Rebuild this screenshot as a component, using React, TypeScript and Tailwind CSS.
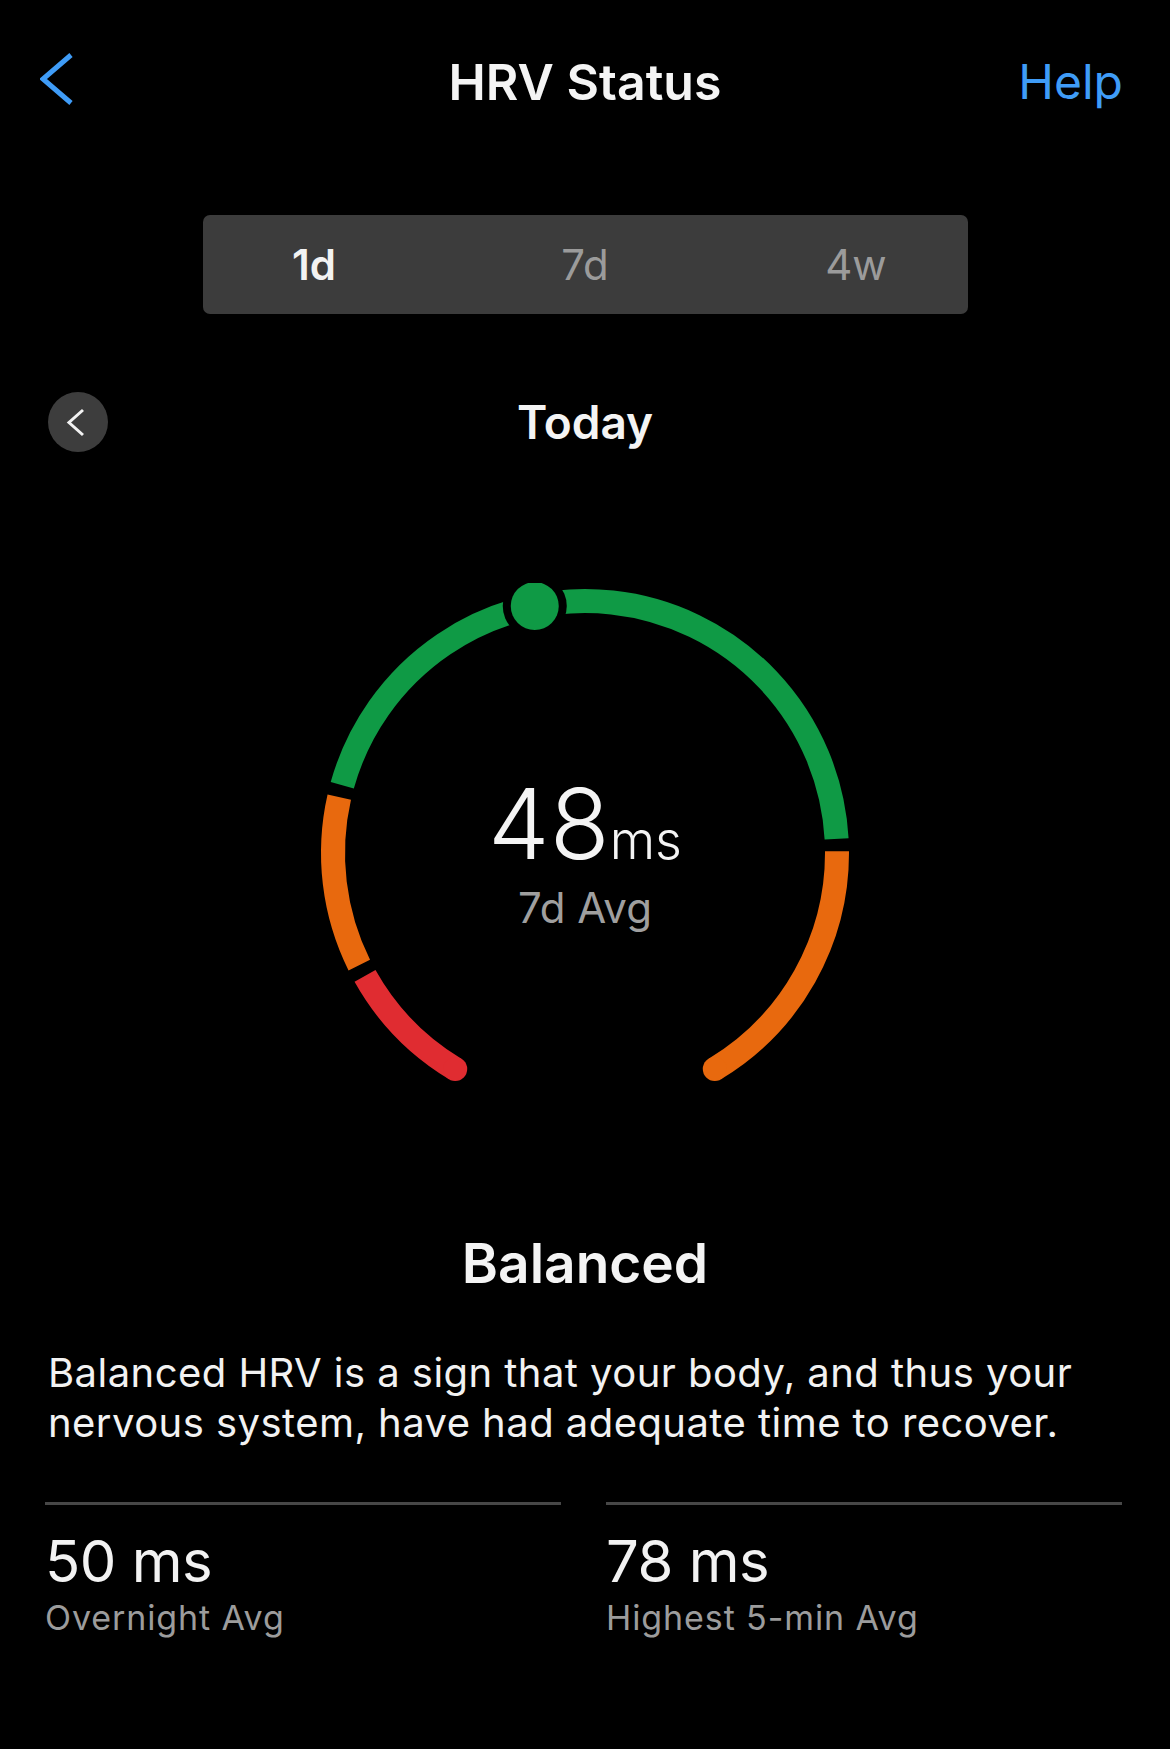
const CX = 300;
const CY = 270;
const R = 252;

// Point on the gauge ring; angle in degrees, clockwise from 12 o'clock.
const pt = (deg: number) => {
  const a = (deg * Math.PI) / 180;
  return [CX + R * Math.sin(a), CY - R * Math.cos(a)];
};

const arc = (from: number, to: number) => {
  const [x1, y1] = pt(from);
  const [x2, y2] = pt(to);
  const large = to - from > 180 ? 1 : 0;
  return `M ${x1} ${y1} A ${R} ${R} 0 ${large} 1 ${x2} ${y2}`;
};

const GREEN = "#0f9a45";
const ORANGE = "#e8690e";
const RED = "#e02c31";

const SEGMENTS = [
  { from: 211, to: 240.8, color: RED },
  { from: 243.6, to: 282.8, color: ORANGE },
  { from: 285.6, to: 446.8, color: GREEN },
  { from: 449.6, to: 509, color: ORANGE },
];

function Gauge() {
  const [sx, sy] = pt(211);
  const [ex, ey] = pt(149);
  const [dx, dy] = pt(348.5);
  return (
    <svg width="600" height="520" viewBox="0 0 600 520" className="block">
      {SEGMENTS.map((s) => (
        <path key={s.from} d={arc(s.from, s.to)} fill="none" stroke={s.color} strokeWidth="24" />
      ))}
      {/* rounded outer ends */}
      <circle cx={sx} cy={sy} r="12" fill={RED} />
      <circle cx={ex} cy={ey} r="12" fill={ORANGE} />
      {/* current value marker */}
      <circle cx={dx} cy={dy} r="32" fill="#000" />
      <circle cx={dx} cy={dy} r="24" fill={GREEN} />
    </svg>
  );
}

function Stat({ value, label }: { value: string; label: string }) {
  return (
    <div className="flex-1">
      <div className="h-[3px] bg-[#474747]" />
      <div className="mt-[27px] text-[58px] leading-none tracking-[-0.5px] text-[#f2f2f2]">{value}</div>
      <div className="mt-[11px] text-[34px] leading-none tracking-[0.9px] text-[#9c9c9c]">{label}</div>
    </div>
  );
}

export default function App() {
  return (
    <div className="w-[1170px] h-[1749px] bg-black font-['Inter',sans-serif] text-white overflow-hidden">
      {/* nav bar */}
      <div className="pt-[56px] h-[108px] grid grid-cols-[1fr_auto_1fr] items-center px-[40px]">
        <svg width="34" height="56" viewBox="0 0 34 56" className="-mt-[6px]">
          <polyline points="31,4 3,28 31,52" fill="none" stroke="#3f9cf7" strokeWidth="5" />
        </svg>
        <div className="text-[50px] leading-none font-semibold text-[#f4f4f4]">HRV Status</div>
        <div className="justify-self-end mr-[7px] text-[48px] leading-none text-[#3f9cf7]">Help</div>
      </div>

      {/* range switch */}
      <div className="mt-[107px] mx-auto w-[765px] h-[99px] rounded-[7px] bg-[#3c3c3c] flex items-center justify-center gap-[151px]">
        <div className="w-[120px] text-center text-[42px] leading-none font-semibold text-[#f2f2f2]">1d</div>
        <div className="w-[120px] text-center text-[42px] leading-none text-[#9b9b9b]">7d</div>
        <div className="w-[120px] text-center text-[42px] leading-none text-[#9b9b9b]">4w</div>
      </div>

      {/* day selector */}
      <div className="mt-[78px] h-[60px] px-[48px] grid grid-cols-[1fr_auto_1fr] items-center">
        <div className="w-[60px] h-[60px] rounded-full bg-[#3d3d3d]">
          <svg width="60" height="60" viewBox="0 0 60 60">
            <polyline points="35,18 21,30.5 35,43" fill="none" stroke="#f2f2f2" strokeWidth="3" />
          </svg>
        </div>
        <div className="text-[46px] leading-none font-semibold text-[#f4f4f4]">Today</div>
        <div />
      </div>

      {/* gauge */}
      <div className="mt-[131px] mx-auto w-[600px] relative">
        <Gauge />
        <div className="absolute inset-0 flex flex-col items-center pt-[192px]">
          <div className="flex items-baseline font-light text-[#f4f4f4]">
            <span className="text-[98px] leading-none">48</span>
            <span className="text-[52px] leading-none">ms</span>
          </div>
          <div className="mt-[14px] text-[42px] leading-none text-[#9f9f9f]">7d Avg</div>
        </div>
      </div>

      <div className="mt-[133px] text-center text-[55px] leading-none font-semibold text-[#f4f4f4]">Balanced</div>

      <p className="mt-[57px] px-[48px] text-[40px] leading-[50px] tracking-[0.45px] text-[#f2f2f2]">
        Balanced HRV is a sign that your body, and thus your
        <br />
        nervous system, have had adequate time to recover.
      </p>

      <div className="mt-[54px] pl-[45px] pr-[48px] flex gap-[45px]">
        <Stat value="50 ms" label="Overnight Avg" />
        <Stat value="78 ms" label="Highest 5-min Avg" />
      </div>
    </div>
  );
}
